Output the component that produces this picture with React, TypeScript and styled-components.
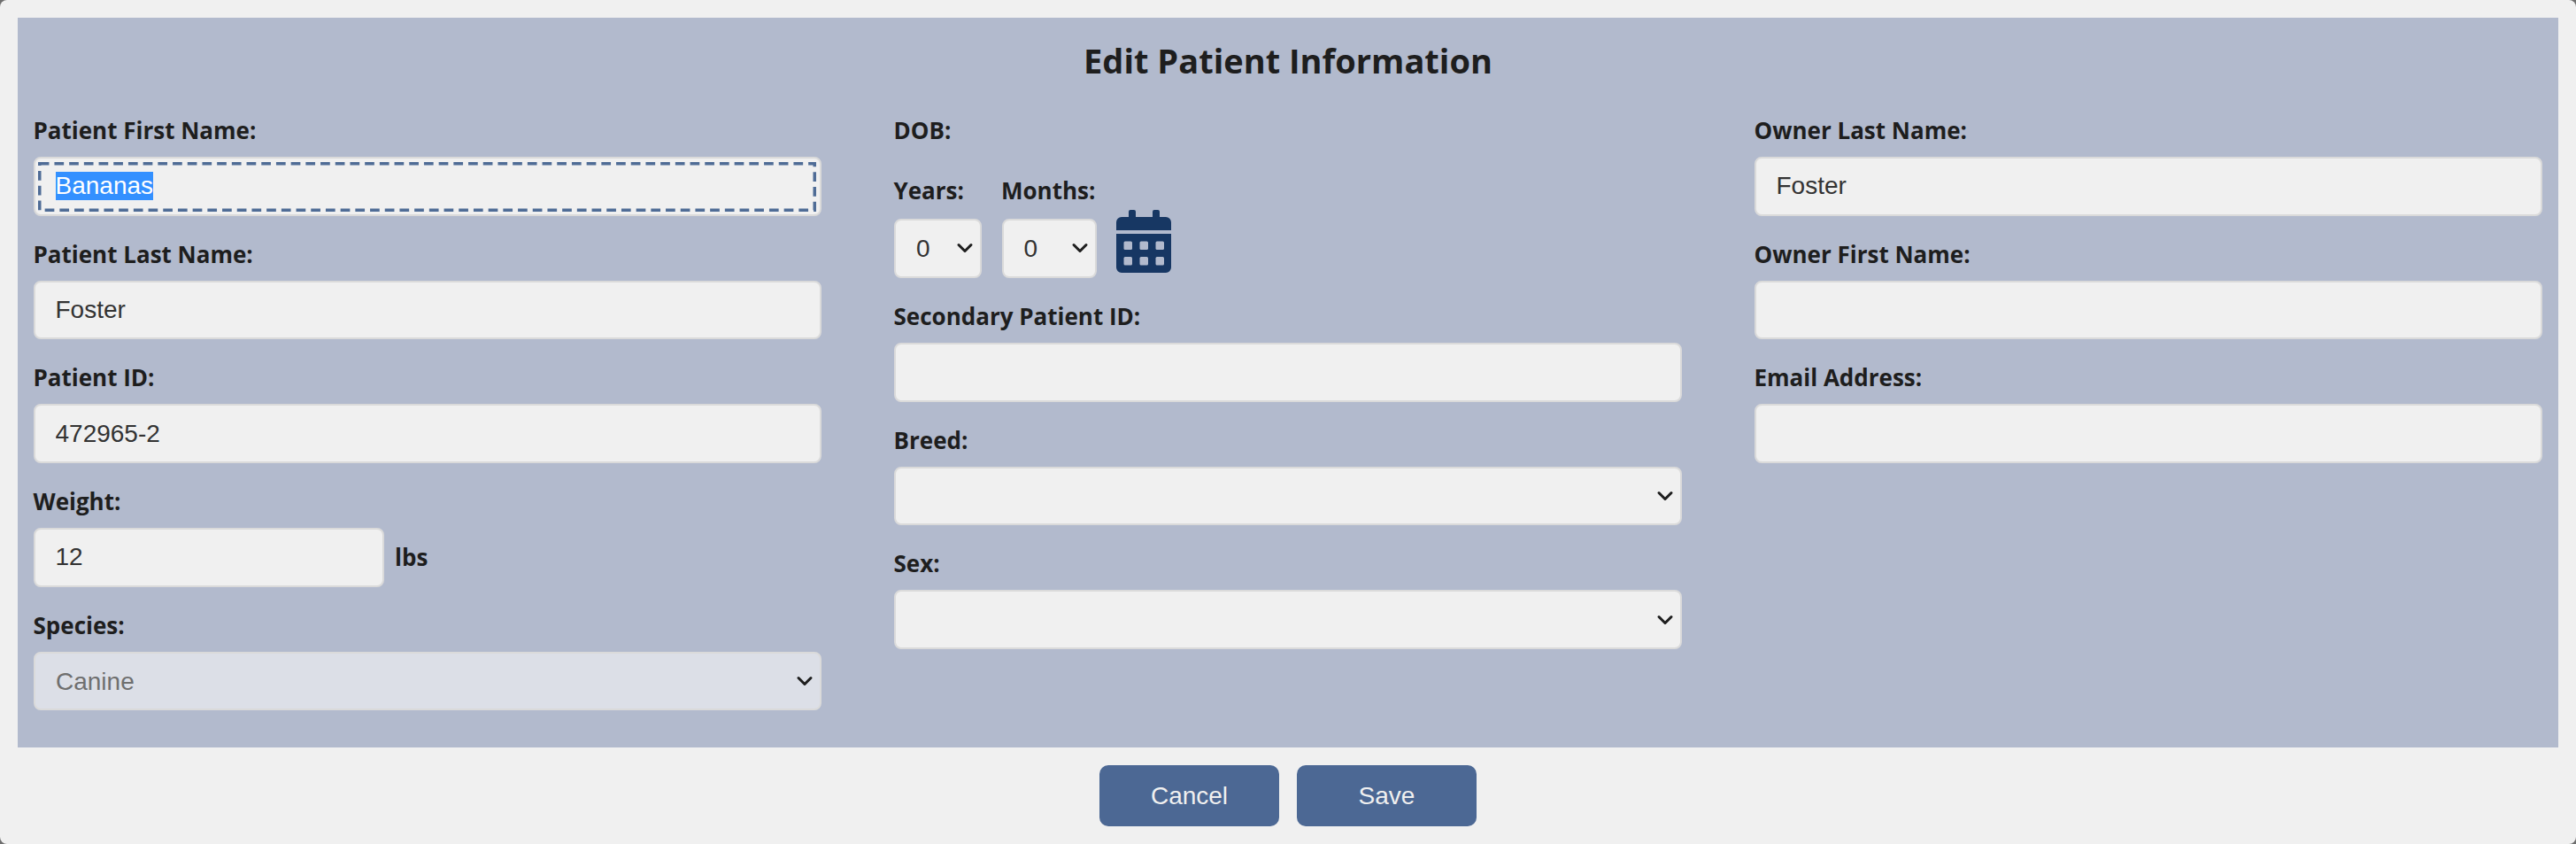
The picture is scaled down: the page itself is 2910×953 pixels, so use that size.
import React, { useEffect, useRef } from 'react';
import styled, { createGlobalStyle } from 'styled-components';
import { ChevronDown } from 'lucide-react';

const GlobalStyle = createGlobalStyle`
  html, body {
    margin: 0;
    padding: 0;
    background: #6e6e6e;
  }
  * {
    box-sizing: border-box;
  }
`;

function CalendarIcon() {
  return (
    <svg width="62" height="71" viewBox="0 0 62 71" aria-hidden="true">
      <path
        fill="#173763"
        d="M16 0h4a2 2 0 0 1 2 2v6h19V2a2 2 0 0 1 2-2h4a2 2 0 0 1 2 2v6h7a6 6 0 0 1 6 6v9H0v-9a6 6 0 0 1 6-6h8V2a2 2 0 0 1 2-2zM0 27h62v38a6 6 0 0 1-6 6H6a6 6 0 0 1-6-6z"
      />
      <g fill="#b2bacd">
        <rect x="8.5" y="35.5" width="9.5" height="9.5" rx="1.5" />
        <rect x="26.5" y="35.5" width="9.5" height="9.5" rx="1.5" />
        <rect x="44.5" y="35.5" width="9.5" height="9.5" rx="1.5" />
        <rect x="8.5" y="53" width="9.5" height="9.5" rx="1.5" />
        <rect x="26.5" y="53" width="9.5" height="9.5" rx="1.5" />
        <rect x="44.5" y="53" width="9.5" height="9.5" rx="1.5" />
      </g>
    </svg>
  );
}

interface SelectFieldProps {
  value?: string;
  disabled?: boolean;
}

function SelectField({ value = '', disabled }: SelectFieldProps) {
  return (
    <SelectWrapper>
      <Select defaultValue={value} disabled={disabled}>
        <option value={value}>{value}</option>
      </Select>
      <Arrow>
        <ChevronDown size={28} strokeWidth={2.6} />
      </Arrow>
    </SelectWrapper>
  );
}

export default function App() {
  const firstName = useRef<HTMLInputElement>(null);

  useEffect(() => {
    firstName.current?.focus();
    firstName.current?.select();
  }, []);

  return (
    <Page>
      <GlobalStyle />
      <Panel>
        <Title>Edit Patient Information</Title>
        <Columns>
          <Column>
            <Field>
              <Label>Patient First Name:</Label>
              <FocusWrapper>
                <Input ref={firstName} defaultValue="Bananas" />
                <FocusRing width="879" height="56" aria-hidden="true">
                  <rect x="1.75" y="1.75" width="875.5" height="52.5" />
                </FocusRing>
              </FocusWrapper>
            </Field>
            <Field>
              <Label>Patient Last Name:</Label>
              <Input defaultValue="Foster" />
            </Field>
            <Field>
              <Label>Patient ID:</Label>
              <Input defaultValue="472965-2" />
            </Field>
            <Field>
              <Label>Weight:</Label>
              <WeightRow>
                <WeightInput defaultValue="12" />
                <Unit>lbs</Unit>
              </WeightRow>
            </Field>
            <Field>
              <Label>Species:</Label>
              <SelectField value="Canine" disabled />
            </Field>
          </Column>
          <Column>
            <DobField>
              <DobLabel>DOB:</DobLabel>
              <DobRow>
                <DobPart $width={99}>
                  <PartLabel>Years:</PartLabel>
                  <SelectField value="0" />
                </DobPart>
                <DobPart $width={107}>
                  <PartLabel>Months:</PartLabel>
                  <SelectField value="0" />
                </DobPart>
                <CalendarSlot>
                  <CalendarIcon />
                </CalendarSlot>
              </DobRow>
            </DobField>
            <Field>
              <Label>Secondary Patient ID:</Label>
              <Input />
            </Field>
            <Field>
              <Label>Breed:</Label>
              <SelectField />
            </Field>
            <Field>
              <Label>Sex:</Label>
              <SelectField />
            </Field>
          </Column>
          <Column>
            <Field>
              <Label>Owner Last Name:</Label>
              <Input defaultValue="Foster" />
            </Field>
            <Field>
              <Label>Owner First Name:</Label>
              <Input />
            </Field>
            <Field>
              <Label>Email Address:</Label>
              <Input />
            </Field>
          </Column>
        </Columns>
      </Panel>
      <Footer>
        <ActionButton>Cancel</ActionButton>
        <ActionButton>Save</ActionButton>
      </Footer>
    </Page>
  );
}

const Page = styled.div`
  width: 2910px;
  height: 953px;
  padding: 20px 20px 0;
  background: #f0f0f0;
  border-radius: 8px;
  overflow: hidden;
`;

const Panel = styled.div`
  height: 824px;
  padding: 0 18px;
  background: #b2bacd;
`;

const Title = styled.h1`
  margin: 0;
  padding-top: 29px;
  height: 110px;
  font: 700 38px/1 'Open Sans', sans-serif;
  color: #1e1e1e;
  text-align: center;
`;

const Columns = styled.div`
  display: grid;
  grid-template-columns: repeat(3, 890px);
  column-gap: 82px;
`;

const Column = styled.div`
  display: flex;
  flex-direction: column;
`;

const Field = styled.div`
  height: 139.7px;
`;

const DobField = styled.div`
  height: 210px;
`;

const Label = styled.label`
  display: block;
  height: 47px;
  margin-left: -0.5px;
  font: 700 26px/34px 'Open Sans', sans-serif;
  color: #1e1e1e;
  white-space: nowrap;
`;

const DobLabel = styled(Label)`
  height: 67.5px;
`;

const PartLabel = styled(Label)`
  height: 49.5px;
`;

const inputStyles = `
  width: 100%;
  height: 66.5px;
  border: 2px solid #dadada;
  border-radius: 8px;
  background: #f0f0f0;
  font: 400 28px 'Liberation Sans', Arial, sans-serif;
  color: #333333;
`;

const Input = styled.input`
  ${inputStyles}
  padding: 0 22.5px;

  &:focus {
    outline: none;
  }

  &::selection {
    background: #3390ff;
    color: #ffffff;
  }
`;

const FocusWrapper = styled.div`
  position: relative;
`;

const FocusRing = styled.svg`
  position: absolute;
  top: 6.3px;
  left: 5.3px;
  fill: none;
  stroke: #4f6c96;
  stroke-width: 3.5px;
  stroke-dasharray: 10.7 6;
  pointer-events: none;
`;

const WeightRow = styled.div`
  display: flex;
  align-items: center;
  gap: 12px;
`;

const WeightInput = styled(Input)`
  width: 396px;
`;

const Unit = styled.span`
  font: 700 26px/35px 'Open Sans', sans-serif;
  color: #1e1e1e;
`;

const SelectWrapper = styled.div`
  position: relative;
  width: 100%;
`;

const Select = styled.select`
  ${inputStyles}
  display: block;
  padding: 0 23px;
  appearance: none;

  &:disabled {
    background: #dcdfe7;
    color: #6f6f6f;
    opacity: 1;
  }
`;

const Arrow = styled.span`
  position: absolute;
  top: 0;
  bottom: 0;
  right: 5px;
  display: flex;
  align-items: center;
  color: #1e1e1e;
  pointer-events: none;
`;

const DobRow = styled.div`
  display: flex;
  align-items: flex-start;
  gap: 22.5px;
`;

const DobPart = styled.div<{ $width: number }>`
  width: ${(p) => p.$width}px;
`;

const CalendarSlot = styled.div`
  margin-top: 39.5px;
`;

const Footer = styled.div`
  display: flex;
  justify-content: center;
  gap: 20px;
  padding-top: 20px;
`;

const ActionButton = styled.button`
  width: 203px;
  height: 69px;
  border: none;
  border-radius: 10px;
  background: #4c6894;
  font: 400 28px 'Liberation Sans', Arial, sans-serif;
  color: #f0f0f0;
`;
